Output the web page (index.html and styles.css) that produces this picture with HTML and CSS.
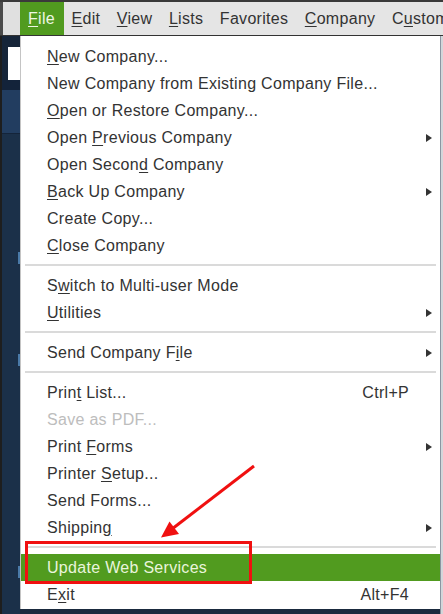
FILE: index.html
```html
<!DOCTYPE html>
<html>
<head>
<meta charset="utf-8">
<link rel="stylesheet" href="styles.css">
</head>
<body>
<div class="screen">
  <div class="menubar">
    <div class="bar-left"></div>
    <span class="mb-item active"><u>F</u>ile</span>
    <span class="mb-item"><u>E</u>dit</span>
    <span class="mb-item"><u>V</u>iew</span>
    <span class="mb-item"><u>L</u>ists</span>
    <span class="mb-item">Favorites</span>
    <span class="mb-item"><u>C</u>ompany</span>
    <span class="mb-item">C<u>u</u>stomers</span>
  </div>
  <div class="main">
    <div class="side">
      <div class="side-top"><div class="side-input"></div></div>
      <div class="side-band"></div>
      <div class="side-nav">
        <div class="side-mark m1"></div>
        <div class="side-mark m2"></div>
        <div class="side-mark m3"></div>
      </div>
    </div>
    <div class="menu">
      <div class="row"><span class="label"><u>N</u>ew Company...</span></div>
      <div class="row"><span class="label">New Company from Existing Company File...</span></div>
      <div class="row"><span class="label"><u>O</u>pen or Restore Company...</span></div>
      <div class="row"><span class="label">Open <u>P</u>revious Company</span><span class="arrow"></span></div>
      <div class="row"><span class="label">Open Secon<u>d</u> Company</span></div>
      <div class="row"><span class="label"><u>B</u>ack Up Company</span><span class="arrow"></span></div>
      <div class="row"><span class="label">Create Copy...</span></div>
      <div class="row"><span class="label"><u>C</u>lose Company</span></div>
      <div class="sep"></div>
      <div class="row"><span class="label">S<u>w</u>itch to Multi-user Mode</span></div>
      <div class="row"><span class="label"><u>U</u>tilities</span><span class="arrow"></span></div>
      <div class="sep"></div>
      <div class="row"><span class="label">Send Company F<u>i</u>le</span><span class="arrow"></span></div>
      <div class="sep"></div>
      <div class="row"><span class="label">Prin<u>t</u> List...</span><span class="shortcut">Ctrl+P</span></div>
      <div class="row disabled"><span class="label">Save as PDF...</span></div>
      <div class="row"><span class="label">Print <u>F</u>orms</span><span class="arrow"></span></div>
      <div class="row"><span class="label">Printer <u>S</u>etup...</span></div>
      <div class="row"><span class="label">Send Forms...</span></div>
      <div class="row"><span class="label">Shippin<u>g</u></span><span class="arrow"></span></div>
      <div class="sep"></div>
      <div class="row selected"><span class="label">Update Web Services</span></div>
      <div class="row"><span class="label">E<u>x</u>it</span><span class="shortcut">Alt+F4</span></div>
    </div>
    <div class="rstrip"></div>
  </div>
  <svg class="annot" width="443" height="614" viewBox="0 0 443 614">
    <rect x="26.5" y="542.5" width="224" height="40" fill="none" stroke="#f01010" stroke-width="3"/>
    <line x1="254" y1="466" x2="172" y2="529" stroke="#f01010" stroke-width="3"/>
    <polygon points="161,537.5 179,534 169.5,521.5" fill="#f01010"/>
  </svg>
</div>
</body>
</html>
```

FILE: styles.css
```css
* { box-sizing: border-box; }
html, body { margin: 0; padding: 0; }
body {
  background: #1b2c42;
  font-family: "Liberation Sans", Arial, sans-serif;
  font-size: 16px;
  color: #333;
}
.screen {
  position: relative;
  width: 443px;
  height: 614px;
  overflow: hidden;
  background: #1a2a3e;
}
.menubar {
  display: flex;
  height: 36px;
  background: #e5e5e5;
  border-top: 2px solid #3a3a3a;
  border-bottom: 1px solid #333;
  white-space: nowrap;
  overflow: hidden;
  letter-spacing: 0.3px;
}
.bar-left {
  flex: 0 0 20px;
  border-left: 3px solid #4a4a4a;
  background: #e0e0e0;
}
.mb-item {
  padding: 0 8.5px 0 8px;
  line-height: 33px;
  color: #333;
}
.mb-item.active {
  background: #519b1f;
  color: #eef6e4;
}
u { text-underline-offset: 2px; }
.main {
  display: flex;
  height: 578px;
}
.side {
  flex: 0 0 20px;
  display: flex;
  flex-direction: column;
  border-left: 2px solid #1e1e1e;
  background: #1b3049;
}
.side-top {
  height: 44px;
  background: #162539;
  padding: 11px 0 0 6px;
}
.side-input {
  height: 33px;
  background: #ffffff;
}
.side-band {
  height: 54px;
  background: #223d60;
  border-top: 10px solid #13233a;
  border-bottom: 1px solid #14243a;
}
.side-nav {
  flex: 1;
  display: flex;
  flex-direction: column;
  align-items: flex-end;
}
.side-mark {
  width: 2px;
  height: 12px;
  background: #4a7aa8;
}
.m1 { margin-top: 118px; }
.m2 { margin-top: 90px; }
.m3 { margin-top: 200px; }
.menu {
  flex: 0 0 420px;
  align-self: flex-start;
  background: #fff;
  border-left: 1px solid #c4c4c4;
  padding: 7px 0 1px 0;
  height: 573px;
  letter-spacing: 0.3px;
}
.row {
  display: flex;
  align-items: center;
  height: 27px;
  padding-left: 26px;
  white-space: nowrap;
}
.label { flex: 1; }
.shortcut {
  width: 70px;
  text-align: right;
  margin-right: 31px;
}
.arrow {
  width: 0;
  height: 0;
  margin-right: 8px;
  border-left: 6px solid #333;
  border-top: 4.5px solid transparent;
  border-bottom: 4.5px solid transparent;
}
.disabled { color: #bdbdbd; }
.selected {
  background: #519b1f;
  color: #eaf5dc;
}
.sep {
  height: 2px;
  margin: 5px 4px 6px 4px;
  background: #dadada;
}
.rstrip {
  flex: 1;
  background: #d3d6da;
  border-left: 1px solid #8c96a2;
}
.annot {
  position: absolute;
  left: 0;
  top: 0;
  pointer-events: none;
}
```
